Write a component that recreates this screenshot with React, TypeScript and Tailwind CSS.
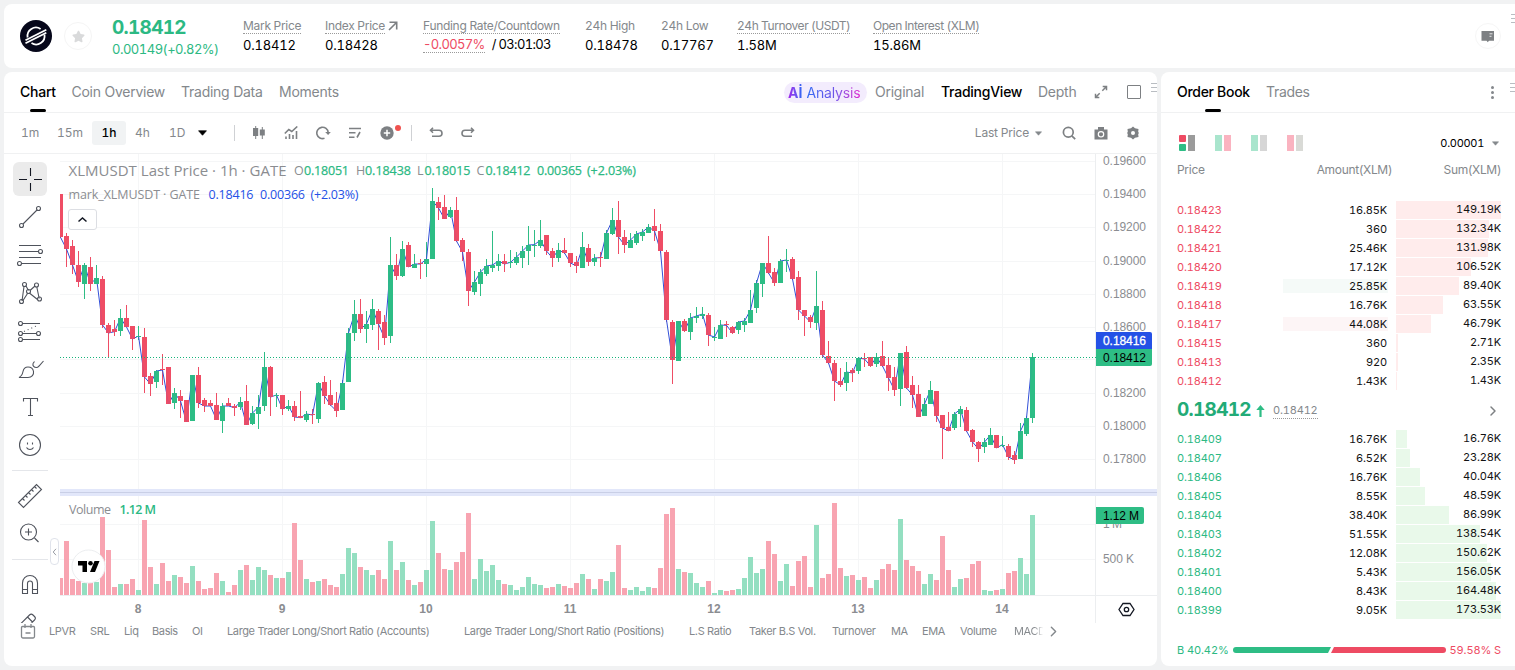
import React from 'react'
import { FiChevronRight } from 'react-icons/fi'
import { FaStar } from 'react-icons/fa'

type Candle = [dir: 'u' | 'd', high: number, top: number, bottom: number, low: number]

// one row per hour, in thirds of a pixel from the top of the price pane
const CANDLES: Candle[] = [
  ['d', 117, 117, 247, 250], ['d', 235, 243, 282, 335], ['d', 255, 273, 330, 357], ['d', 288, 330, 381, 395],
  ['u', 323, 330, 387, 431], ['d', 306, 336, 387, 407], ['u', 330, 369, 387, 387], ['d', 363, 372, 510, 518],
  ['d', 504, 510, 534, 607], ['d', 495, 522, 530, 542], ['u', 462, 489, 528, 542], ['d', 450, 489, 516, 516],
  ['d', 513, 513, 552, 585], ['u', 513, 543, 546, 556], ['d', 519, 546, 666, 713], ['d', 653, 663, 687, 723],
  ['u', 645, 648, 681, 698], ['d', 597, 642, 645, 689], ['d', 636, 636, 747, 747], ['u', 698, 714, 744, 761],
  ['d', 705, 723, 738, 788], ['d', 735, 735, 801, 801], ['u', 660, 660, 797, 797], ['d', 636, 660, 744, 758],
  ['d', 728, 735, 753, 771], ['d', 735, 744, 753, 753], ['d', 714, 750, 794, 794], ['u', 744, 753, 797, 833],
  ['d', 730, 744, 753, 753], ['d', 747, 753, 758, 782], ['u', 726, 741, 756, 764], ['d', 690, 738, 810, 810],
  ['u', 753, 774, 807, 810], ['u', 720, 756, 777, 822], ['u', 591, 636, 753, 768], ['d', 633, 636, 726, 783],
  ['u', 714, 720, 724, 756], ['d', 720, 720, 762, 780], ['u', 735, 753, 762, 768], ['d', 738, 753, 786, 798],
  ['d', 708, 783, 788, 789], ['u', 768, 777, 795, 801], ['d', 762, 777, 780, 807], ['u', 681, 684, 792, 803],
  ['d', 663, 681, 723, 747], ['d', 675, 720, 750, 753], ['d', 711, 744, 768, 786], ['u', 675, 684, 765, 765],
  ['u', 519, 534, 681, 681], ['u', 435, 477, 534, 558], ['d', 432, 477, 522, 534], ['u', 468, 507, 522, 564],
  ['u', 432, 462, 510, 525], ['d', 462, 468, 507, 585], ['d', 480, 501, 549, 570], ['u', 246, 330, 543, 564],
  ['d', 297, 330, 363, 375], ['u', 258, 282, 363, 366], ['d', 261, 270, 336, 336], ['u', 297, 327, 339, 339],
  ['d', 312, 324, 327, 372], ['u', 261, 312, 327, 366], ['u', 99, 138, 312, 312], ['d', 126, 141, 159, 195],
  ['d', 120, 156, 192, 192], ['u', 156, 165, 186, 189], ['d', 126, 165, 258, 260], ['d', 249, 255, 291, 318],
  ['d', 282, 291, 408, 453], ['u', 348, 381, 411, 420], ['u', 342, 351, 387, 423], ['u', 312, 333, 357, 363],
  ['u', 228, 330, 339, 351], ['u', 297, 318, 333, 348], ['d', 297, 318, 327, 351], ['u', 285, 322, 325, 339],
  ['u', 291, 306, 324, 330], ['u', 273, 288, 309, 339], ['u', 213, 270, 288, 330], ['u', 225, 269, 272, 306],
  ['u', 195, 255, 273, 279], ['d', 240, 240, 288, 300], ['d', 279, 288, 309, 336], ['u', 264, 285, 309, 321],
  ['d', 249, 285, 294, 297], ['d', 294, 294, 324, 336], ['d', 303, 321, 333, 354], ['u', 231, 276, 339, 339],
  ['d', 267, 279, 321, 333], ['u', 297, 309, 321, 333], ['d', 291, 305, 308, 336], ['u', 225, 234, 312, 312],
  ['u', 159, 195, 237, 240], ['d', 138, 195, 246, 297], ['d', 225, 246, 270, 294], ['u', 234, 255, 279, 279],
  ['u', 228, 237, 264, 270], ['u', 222, 231, 243, 258], ['u', 207, 216, 234, 234], ['d', 162, 213, 228, 258],
  ['d', 207, 228, 288, 294], ['d', 285, 291, 495, 500], ['d', 495, 501, 615, 687], ['u', 498, 498, 618, 618],
  ['d', 492, 498, 528, 531], ['u', 474, 489, 531, 555], ['u', 456, 483, 489, 504], ['u', 456, 477, 483, 492],
  ['d', 474, 480, 540, 573], ['u', 516, 546, 549, 558], ['u', 495, 510, 552, 552], ['d', 498, 508, 511, 546],
  ['d', 513, 516, 534, 537], ['u', 498, 501, 525, 537], ['u', 489, 498, 510, 531], ['u', 405, 465, 504, 504],
  ['u', 375, 384, 459, 474], ['u', 324, 324, 387, 426], ['d', 243, 324, 354, 357], ['d', 339, 351, 384, 393],
  ['u', 312, 318, 384, 384], ['u', 282, 315, 318, 351], ['d', 306, 312, 372, 375], ['d', 348, 366, 465, 495],
  ['d', 465, 465, 483, 543], ['d', 480, 486, 501, 519], ['u', 348, 453, 504, 525], ['d', 438, 465, 600, 606],
  ['d', 558, 603, 624, 627], ['d', 615, 624, 678, 738], ['d', 639, 678, 690, 696], ['u', 621, 651, 684, 708],
  ['d', 639, 645, 654, 681], ['u', 606, 609, 648, 657], ['d', 594, 609, 612, 636], ['d', 606, 606, 633, 636],
  ['u', 594, 606, 627, 636], ['d', 558, 603, 633, 636], ['d', 606, 630, 669, 708], ['d', 636, 666, 705, 723],
  ['u', 594, 594, 702, 753], ['d', 573, 591, 699, 702], ['d', 663, 690, 720, 759], ['d', 690, 717, 786, 786],
  ['u', 729, 747, 783, 783], ['u', 678, 705, 747, 747], ['d', 708, 708, 783, 801], ['d', 780, 780, 819, 912],
  ['d', 771, 816, 828, 828], ['u', 771, 777, 819, 825], ['u', 753, 762, 777, 816], ['d', 756, 765, 828, 831],
  ['d', 822, 825, 861, 876], ['d', 858, 861, 882, 921], ['u', 849, 861, 876, 894], ['u', 819, 840, 870, 870],
  ['d', 840, 840, 879, 879], ['u', 843, 869, 872, 876], ['d', 867, 873, 906, 915], ['d', 888, 900, 915, 927],
  ['u', 804, 828, 912, 912], ['u', 783, 789, 837, 843], ['u', 594, 606, 789, 804],
]

// top edge of each volume bar, the pane's floor is at 375
const VOLUMES = [
  324, 213, 327, 333, 338, 338, 336, 140, 240, 351, 342, 342, 327, 360, 151, 292, 342, 279, 333, 315,
  321, 339, 288, 333, 357, 354, 309, 333, 366, 345, 300, 285, 330, 291, 300, 315, 324, 324, 305, 160,
  270, 327, 336, 333, 327, 345, 351, 312, 233, 249, 291, 300, 315, 300, 327, 213, 300, 276, 330, 345,
  336, 300, 153, 249, 297, 300, 276, 246, 129, 327, 267, 303, 285, 329, 342, 345, 360, 351, 321, 343,
  345, 354, 351, 342, 348, 354, 339, 312, 327, 357, 327, 333, 305, 225, 354, 360, 351, 363, 351, 354,
  293, 132, 114, 297, 305, 309, 339, 351, 333, 369, 360, 363, 360, 357, 324, 261, 309, 297, 213, 252,
  333, 282, 348, 273, 258, 351, 165, 324, 312, 99, 293, 318, 315, 330, 321, 354, 330, 297, 282, 300,
  147, 270, 288, 303, 343, 312, 330, 198, 300, 351, 327, 324, 282, 273, 360, 363, 360, 357, 309, 303,
  264, 312, 135,
]

const PRICE_TICKS = [
  { label: '0.19600', y: 160.5 },
  { label: '0.19400', y: 193.5 },
  { label: '0.19200', y: 226.5 },
  { label: '0.19000', y: 260.5 },
  { label: '0.18800', y: 293.5 },
  { label: '0.18600', y: 326.5 },
  { label: '0.18200', y: 392.5 },
  { label: '0.18000', y: 425.5 },
  { label: '0.17800', y: 458.5 },
]

const DAYS = [8, 9, 10, 11, 12, 13, 14]

const STATS = [
  { label: '24h High', value: '0.18478', width: 'w-[76px]', dotted: false },
  { label: '24h Low', value: '0.17767', width: 'w-[76px]', dotted: false },
  { label: '24h Turnover (USDT)', value: '1.58M', width: 'w-[136px]', dotted: true },
  { label: 'Open Interest (XLM)', value: '15.86M', width: 'w-[120px]', dotted: true },
]

const ASKS = [
  { price: '0.18423', amount: '16.85K', sum: '149.19K', bar: 105 },
  { price: '0.18422', amount: '360', sum: '132.34K', bar: 93 },
  { price: '0.18421', amount: '25.46K', sum: '131.98K', bar: 92 },
  { price: '0.18420', amount: '17.12K', sum: '106.52K', bar: 75 },
  { price: '0.18419', amount: '25.85K', sum: '89.40K', bar: 63, flash: 'bg-[#f5faf8]' },
  { price: '0.18418', amount: '16.76K', sum: '63.55K', bar: 47 },
  { price: '0.18417', amount: '44.08K', sum: '46.79K', bar: 35, flash: 'bg-[#fdf5f6]' },
  { price: '0.18415', amount: '360', sum: '2.71K', bar: 2 },
  { price: '0.18413', amount: '920', sum: '2.35K', bar: 1.5 },
  { price: '0.18412', amount: '1.43K', sum: '1.43K', bar: 1 },
]

const BIDS = [
  { price: '0.18409', amount: '16.76K', sum: '16.76K', bar: 11 },
  { price: '0.18407', amount: '6.52K', sum: '23.28K', bar: 14 },
  { price: '0.18406', amount: '16.76K', sum: '40.04K', bar: 24 },
  { price: '0.18405', amount: '8.55K', sum: '48.59K', bar: 29 },
  { price: '0.18404', amount: '38.40K', sum: '86.99K', bar: 53 },
  { price: '0.18403', amount: '51.55K', sum: '138.54K', bar: 84 },
  { price: '0.18402', amount: '12.08K', sum: '150.62K', bar: 91 },
  { price: '0.18401', amount: '5.43K', sum: '156.05K', bar: 95 },
  { price: '0.18400', amount: '8.43K', sum: '164.48K', bar: 100 },
  { price: '0.18399', amount: '9.05K', sum: '173.53K', bar: 105 },
]

const INDICATORS = [
  { label: 'LPVR', width: 'w-[41px]' },
  { label: 'SRL', width: 'w-[34px]' },
  { label: 'Liq', width: 'w-[28px]' },
  { label: 'Basis', width: 'w-[40px]' },
  { label: 'OI', width: 'w-[35px]' },
  { label: 'Large Trader Long/Short Ratio (Accounts)', width: 'w-[237px]' },
  { label: 'Large Trader Long/Short Ratio (Positions)', width: 'w-[225px]' },
  { label: 'L.S Ratio', width: 'w-[60px]' },
  { label: 'Taker B.S Vol.', width: 'w-[83px]' },
  { label: 'Turnover', width: 'w-[59px]' },
  { label: 'MA', width: 'w-[31px]' },
  { label: 'EMA', width: 'w-[38px]' },
  { label: 'Volume', width: 'w-[54px]' },
]

const BOOK_VIEWS = [
  { left: 'bg-[#a9e5cd]', right: 'bg-[#fab3c0]' },
  { left: 'bg-[#a9e5cd]', right: 'bg-[#d6d6d6]' },
  { left: 'bg-[#fab3c0]', right: 'bg-[#d9dad6]' },
]

const DRAW_TOOLS = [
  {
    name: 'trend',
    icon: (
      <>
        <path d="M10 24 24 10" />
        <circle cx="8.5" cy="25.5" r="2" />
        <circle cx="25.5" cy="8.5" r="2" />
      </>
    ),
  },
  {
    name: 'fib',
    icon: (
      <>
        <path d="M6 7.5h22M6 13.5h19.5M6 19.5h22M8.5 25.5H28" />
        <circle cx="27.5" cy="13.5" r="2" />
        <circle cx="6.5" cy="25.5" r="2" />
      </>
    ),
  },
  {
    name: 'pattern',
    icon: (
      <>
        <path d="M9 25 11 10.5M13 10 15.5 14.5M17 14.5 22 10M23.8 11 26.2 22.5M24.5 23.5 17 17.5M14.5 17.5 10 24.5" />
        <circle cx="11.5" cy="8.5" r="2" />
        <circle cx="23.5" cy="9" r="2" />
        <circle cx="15.5" cy="15.5" r="2" />
        <circle cx="8.5" cy="25.5" r="2" />
        <circle cx="26.5" cy="23" r="2" />
      </>
    ),
  },
  {
    name: 'forecast',
    icon: (
      <>
        <path d="M9.5 9.5H27M9.5 19.5h14M9.5 25.5H27" />
        <path d="M11 17.5 25.5 11" strokeDasharray="1 3" />
        <circle cx="7.5" cy="9.5" r="2" />
        <circle cx="7.5" cy="19.5" r="2" />
        <circle cx="25.5" cy="19.5" r="2" />
        <circle cx="7.5" cy="25.5" r="2" />
      </>
    ),
  },
  {
    name: 'brush',
    icon: (
      <>
        <path d="M6 25.500h9c4 0 6-3 5.500-6-.5-3-3-4.500-5.500-4.500-3 0-4.500 2-5 4.500-.5 2.500-2 5-4 6Z" />
        <path d="M20 11.500c-.5 2.500 1 4 3.500 4 1.500 0 2-1 2.500-1.500l4.500-5M20 11.500l1.500-2" />
      </>
    ),
  },
  { name: 'text', icon: <path d="M10.500 11.500v-3h14v3M17.500 8.500v17M15 25.500h5" /> },
  {
    name: 'emoji',
    icon: (
      <>
        <circle cx="17" cy="17" r="10.5" />
        <path d="M14.500 14.500v2M19.500 14.500v2M13.500 19.500c1 1.700 2 2 3.500 2s2.500-.3 3.500-2" />
      </>
    ),
  },
]

function ToolIcon({ children }: { children: React.ReactNode }) {
  return (
    <svg
      width="34"
      height="34"
      viewBox="0 0 34 34"
      fill="none"
      stroke="#4f535c"
      strokeWidth="1.1"
      className="shrink-0"
    >
      {children}
    </svg>
  )
}

function Logo() {
  return (
    <svg width="32" height="32" viewBox="0 0 32 32" className="shrink-0">
      <circle cx="16" cy="16" r="16" fill="#06071a" />
      <g fill="none" stroke="#fff" strokeWidth="1.8">
        <path d="M7.6 17.5a8.500 8.500 0 0 1 13-8.600" />
        <path d="M24.5 14.6a8.500 8.500 0 0 1-13 8.500" />
        <path d="M5.5 20.3 26.3 9.7" />
        <path d="M5.5 23.3 26.3 12.7" />
      </g>
    </svg>
  )
}

function DragHandle() {
  return (
    <span className="flex w-1.5 flex-col gap-[3px]">
      <i className="h-px bg-[#b9bdc2]" />
      <i className="h-px bg-[#b9bdc2]" />
      <i className="h-px bg-[#b9bdc2]" />
    </span>
  )
}

function Caret({ className }: { className: string }) {
  return (
    <svg width="8" height="5" viewBox="0 0 8 5" className={className}>
      <path d="M.5.5h7L4 4.5Z" fill="currentColor" stroke="currentColor" strokeWidth=".6" strokeLinejoin="round" />
    </svg>
  )
}

function TopBar() {
  return (
    <header className="flex h-16 items-center rounded-l-lg bg-white pl-4">
      <Logo />
      <span className="ml-3 flex size-7 items-center justify-center rounded-full border border-[#f5f5f5]">
        <FaStar size={13} className="text-[#d9dadb]" />
      </span>

      <div className="ml-5 w-[131px] pt-0.5 text-[#2cb983] tabular-nums">
        <p className="text-[19px] leading-[23px] font-bold tracking-[-0.7px]">0.18412</p>
        <p className="text-[13px] leading-[20px] tracking-[-0.5px]">0.00149(+0.82%)</p>
      </div>

      <div className="flex pb-0.5 text-[12px] leading-[17px] tracking-[-0.3px] text-[#84888c] tabular-nums">
        <div className="w-[82px]">
          <span className="border-b border-dotted border-[#9a9a9a]">Mark Price</span>
          <p className="mt-[3px] text-[13px] tracking-[-0.2px] text-black">0.18412</p>
        </div>
        <div className="w-[98px]">
          <span className="whitespace-nowrap">
            <span className="border-b border-dotted border-[#9a9a9a]">Index Price</span>
            <svg
              width="10"
              height="10"
              viewBox="0 0 10 10"
              fill="none"
              stroke="#7d8083"
              strokeWidth="1.6"
              className="ml-[3px] inline-block align-[-1px]"
            >
              <path d="M1 9 8.5 1.5M1.5 1.300h7.200V8.500" />
            </svg>
          </span>
          <p className="mt-[3px] text-[13px] tracking-[-0.2px] text-black">0.18428</p>
        </div>
        <div className="w-[162px]">
          <span className="border-b border-dotted border-[#9a9a9a] whitespace-nowrap">Funding Rate/Countdown</span>
          <p className="mt-0.5 text-[13px] tracking-[-0.65px] text-black">
            <span className="border-b border-dotted border-[#9a9a9a] text-[#ee4b63]">-0.0057%</span>
            <span className="ml-[7px]">/ 03:01:03</span>
          </p>
        </div>
        {STATS.map((stat) => (
          <div key={stat.label} className={stat.width}>
            <span
              className={
                stat.dotted
                  ? 'border-b border-dotted border-[#9a9a9a] tracking-[-0.45px] whitespace-nowrap'
                  : 'whitespace-nowrap'
              }
            >
              {stat.label}
            </span>
            <p className="mt-[3px] text-[13px] tracking-[-0.2px] text-black">{stat.value}</p>
          </div>
        ))}
      </div>

      <span className="mr-[5px] ml-auto flex size-[26px] items-center justify-center rounded-full border border-[#f6f6f6]">
        <svg width="14" height="13" viewBox="0 0 14 13">
          <path d="M.5 1h12.5v9.800H8l-1.200 1.500-1.200-1.500H.5Z" fill="#7d8083" />
          <path d="M8.500 3.800h3M8.500 6.300h2" stroke="#fff" strokeOpacity=".8" />
        </svg>
      </span>
      <div className="flex h-full w-[9px] flex-col justify-start overflow-hidden pt-2.5 pl-[5px]">
        <DragHandle />
      </div>
    </header>
  )
}

function ChartTabs() {
  return (
    <div className="flex h-[41px] items-center border-b border-[#f0f1f2] pl-4 text-[14px] tracking-[-0.25px] text-[#84888c]">
      <div className="relative w-[51.5px] pb-px font-medium text-black">
        Chart
        <span className="absolute top-[27.5px] left-[10px] h-[3px] w-4 rounded-sm bg-black" />
      </div>
      <span className="w-[109.5px] pb-px">Coin Overview</span>
      <span className="w-[98px] pb-px">Trading Data</span>
      <span className="pb-px">Moments</span>

      <div className="ml-auto flex items-center">
        <span className="flex h-[21px] w-[83px] items-center rounded-full bg-[#f3ecfd] pl-1">
          <b className="bg-linear-to-r from-[#a01bea] to-[#2565f5] bg-clip-text font-bold tracking-normal text-transparent">
            Aİ
          </b>
          <span className="ml-1 bg-linear-to-r from-[#2b6bf3] via-[#6a55ea] to-[#dd22cf] bg-clip-text tracking-[-0.15px] text-transparent">
            Analysis
          </span>
        </span>
        <span className="ml-2 w-[66px] pb-px">Original</span>
        <span className="w-[97px] pb-px font-medium text-black">TradingView</span>
        <span className="w-[56px] pb-px">Depth</span>
        <svg width="14" height="14" viewBox="0 0 14 14" fill="none" stroke="#7d8083" strokeWidth="1.5">
          <path d="M8.3 5.7 12 2M8.7 1.5h3.8v3.8M5.7 8.3 2 12M5.3 12.5H1.5V8.7" />
        </svg>
        <span className="ml-[19px] size-[14px] rounded-[1px] border-[1.5px] border-[#7d8083]" />
        <div className="ml-[10px] h-[19px]">
          <DragHandle />
        </div>
      </div>
    </div>
  )
}

function ChartToolbar() {
  return (
    <div className="flex h-[41px] items-center border-b border-[#f0f1f2] pl-[17px] text-[12px] text-[#84888c] tabular-nums">
      <span className="w-[36px]">1m</span>
      <span className="w-[35px]">15m</span>
      <span className="flex h-6 w-[34px] items-center justify-center rounded-[3px] bg-[#f1f3f4] font-medium text-black">
        1h
      </span>
      <span className="ml-[9px] w-[34px]">4h</span>
      <span className="w-[29px]">1D</span>
      <Caret className="h-[6px] w-[9px] text-black" />
      <span className="ml-[27px] h-4 w-px bg-[#cfd1d4]" />

      <svg width="14" height="14" viewBox="0 0 14 14" className="ml-[17px]" fill="#7d8083">
        <path d="M3.2 0h1v2h2v8h-2v3h-1v-3H1V2h2.2ZM9.8 1h1v2.5h2v6h-2V13h-1V9.5h-2v-6h2Z" />
      </svg>
      <svg width="14" height="14" viewBox="0 0 14 14" className="ml-[18px]" fill="none" stroke="#7d8083" strokeWidth="1.6">
        <path d="m.8 7.5 4-4 3 2 5.500-5M2 10.5V13M5.5 8v5M9 9v4M12.5 5v8" />
      </svg>
      <svg width="15" height="14" viewBox="0 0 15 14" className="ml-[18px]" fill="none" stroke="#7d8083" strokeWidth="1.6">
        <path d="M8.500 12.3A5.700 5.700 0 1 1 12.2 6.500" />
        <path d="M9.2 6h5.600L12.100 9Z" fill="#7d8083" stroke="none" />
      </svg>
      <svg width="14" height="12" viewBox="0 0 14 12" className="ml-[17px]" fill="none" stroke="#7d8083" strokeWidth="1.6">
        <path d="M1 1.5h12M1 5.8h6.5M1 10.2h5.5M12 5l-3 5.5" />
      </svg>
      <span className="relative ml-[18px] size-[14px]">
        <svg width="14" height="14" viewBox="0 0 14 14">
          <circle cx="7" cy="7" r="6.7" fill="#7d8083" />
          <path d="M7 3.8v6.4M3.8 7h6.4" stroke="#fff" strokeWidth="1.5" />
        </svg>
        <i className="absolute -top-px left-[15px] size-1.5 rounded-full bg-[#f0524f]" />
      </span>
      <span className="ml-[17px] h-4 w-px bg-[#cfd1d4]" />
      <svg width="14" height="12" viewBox="0 0 14 12" className="ml-[17px]" fill="none" stroke="#7d8083" strokeWidth="1.6">
        <path d="M4 .8 1.5 3.3 4 5.8M1.8 3.3h8.2a2.800 2.800 0 0 1 0 6H3" />
      </svg>
      <svg width="14" height="12" viewBox="0 0 14 12" className="ml-[18px]" fill="none" stroke="#7d8083" strokeWidth="1.6">
        <path d="m10 .8 2.5 2.5L10 5.8M12.2 3.3H4a2.800 2.800 0 0 0 0 6h7" />
      </svg>

      <span className="ml-auto tracking-[-0.2px]">Last Price</span>
      <Caret className="ml-1.5 h-[5px] w-[7px]" />
      <svg width="14" height="14" viewBox="0 0 14 14" className="ml-[20px]" fill="none" stroke="#7d8083" strokeWidth="1.7">
        <circle cx="6.3" cy="6.3" r="4.9" />
        <path d="m9.8 9.8 3.4 3.4" />
      </svg>
      <svg width="14" height="13" viewBox="0 0 14 13" className="ml-[18px]">
        <path d="M4 0h6v2.5h3.5v10H.5v-10H4Z" fill="#7d8083" />
        <circle cx="7" cy="7.3" r="2.7" fill="none" stroke="#fff" strokeWidth="1.2" />
      </svg>
      <svg width="14" height="14" viewBox="0 0 14 14" className="mr-[17px] ml-[18px]">
        <path
          d="M7 .5 9 2.2 12.5 3 12.2 6 13 7l-.8 1 .3 3L9 11.8 7 13.5 5 11.8 1.5 11l.3-3L1 7l.8-1-.3-3L5 2.2Z"
          fill="#7d8083"
        />
        <circle cx="7" cy="7" r="2" fill="#fff" />
      </svg>
    </div>
  )
}

function DrawingTools() {
  return (
    <div className="flex h-[469px] w-12 shrink-0 flex-col items-center gap-1 overflow-hidden pt-2 pl-1">
      <span className="rounded-md bg-[#ebebeb]">
        <svg width="34" height="34" viewBox="0 0 34 34" stroke="#131722" strokeWidth="1.1">
          <path d="M17.5 6v8M17.5 21v8M6 17.5h8M21 17.5h8" />
        </svg>
      </span>
      {DRAW_TOOLS.map((tool) => (
        <ToolIcon key={tool.name}>{tool.icon}</ToolIcon>
      ))}
      <span className="mt-1 h-px w-9 shrink-0 bg-[#e4e6ea]" />
      <span className="mt-1 flex shrink-0 flex-col gap-1">
        <ToolIcon>
          <path d="M5.5 23.5 23.5 5.5 28.5 10.5 10.5 28.5ZM9.5 19.5l2 2M12.5 16.5l2 2M15.5 13.5l2 2M18.5 10.5l2 2M21.5 7.5l2 2" />
        </ToolIcon>
        <ToolIcon>
          <circle cx="15.5" cy="15" r="8" />
          <path d="M15.5 11.5v7M12 15h7M21.5 21l4 4" />
        </ToolIcon>
      </span>
      <span className="mt-1 h-px w-9 shrink-0 bg-[#e4e6ea]" />
      <span className="mt-1 flex shrink-0 flex-col gap-1">
        <ToolIcon>
          <path d="M9.5 25.5V15a7.500 7.500 0 0 1 15 0v10.500h-5V15.500a2.500 2.500 0 0 0-5 0v10ZM9.5 21.500h5M19.5 21.500h5" />
        </ToolIcon>
        <ToolIcon>
          <path d="M8 17.500 16.500 9c1-1 2.500-1 3.500 0l1.500 1.500c1 1 1 2.500 0 3.500L13 22.500M14.500 11l5 5M21 17.500h5" />
        </ToolIcon>
      </span>
    </div>
  )
}

// x and y below are window coordinates, the viewBox is offset to suit
function PriceChart() {
  const markLine = CANDLES.map(
    ([dir, , top, bottom], i) => `${i * 18 + 1.5},${dir === 'u' ? top : bottom}`,
  ).join(' ')

  return (
    <svg
      width="1097"
      height="469"
      viewBox="60 154 1097 469"
      className="shrink-0 font-['Liberation_Sans',sans-serif]"
    >
      <g stroke="#f5f6f7" shapeRendering="crispEdges">
        {PRICE_TICKS.map((tick) => (
          <path key={tick.label} d={`M60 ${tick.y + 1}H1096`} />
        ))}
        <path d="M60 359.5H1096M60 524.5H1096M60 559.5H1096" />
        {DAYS.map((day, i) => (
          <path key={day} d={`M${138.5 + i * 144} 154V595`} />
        ))}
      </g>
      <path d="M1095.5 154V623M60 595.5H1157" stroke="#eceef0" shapeRendering="crispEdges" />

      <rect x="60" y="489" width="1097" height="7" fill="#e2e7fa" />
      <path d="M60 492.5H1157" stroke="#c9cfe6" shapeRendering="crispEdges" />

      <svg x="60" y="154" width="1036" height="442" viewBox="0 -3 3108 1326">
        <g shapeRendering="crispEdges">
          {CANDLES.map(([dir], i) => (
            <rect
              key={i}
              x={i * 18 - 6}
              y={945 + VOLUMES[i]}
              width="15"
              height={375 - VOLUMES[i]}
              fill={dir === 'u' ? '#94dfc1' : '#f8a4b1'}
            />
          ))}
          {CANDLES.map(([dir, high, top, bottom, low], i) => (
            <path
              key={i}
              d={`M${i * 18} ${high}h3V${low}h-3ZM${i * 18 - 6} ${top}h15V${bottom}h-15Z`}
              fill={dir === 'u' ? '#2ebd85' : '#ef4d65'}
            />
          ))}
        </g>
        <polyline points={markLine} fill="none" stroke="#3350d8" strokeWidth="3" />
        <g shapeRendering="crispEdges">
          {CANDLES.map(([dir, , top, bottom], i) => (
            <path
              key={i}
              d={`M${i * 18 - 6} ${top}h15V${bottom}h-15Z`}
              fill={dir === 'u' ? '#2ebd85' : '#ef4d65'}
              fillOpacity=".88"
            />
          ))}
        </g>
      </svg>
      <path d="M60 357.5H1096" stroke="#16b37a" strokeDasharray="1 2" />

      <g fill="#8b8d91" fontSize="12">
        {PRICE_TICKS.map((tick) => (
          <text key={tick.label} x="1103" y={tick.y + 4.5} textLength="43">
            {tick.label}
          </text>
        ))}
        <text x="1103" y="528" textLength="19">1 M</text>
        <text x="1103" y="563" textLength="31">500 K</text>
        <g textAnchor="middle" fontWeight="bold">
          {DAYS.map((day, i) => (
            <text key={day} x={138 + i * 144} y="613">
              {day}
            </text>
          ))}
        </g>
      </g>
      <path d="M1096 332h54a2 2 0 0 1 2 2v15h-56Z" fill="#2451e6" />
      <path d="M1096 349h56v15a2 2 0 0 1-2 2h-54Z" fill="#2ebd85" />
      <path d="M1096 507h46a2 2 0 0 1 2 2v13a2 2 0 0 1-2 2h-46Z" fill="#2ebd85" />
      <g fontSize="12">
        <text x="1103" y="345" textLength="43" fill="#fff" stroke="#fff" strokeWidth=".3">0.18416</text>
        <text x="1103" y="362" textLength="43" fill="#000">0.18412</text>
        <text x="1103" y="520" textLength="36" fill="#000">1.12 M</text>
      </g>

      <g className="font-['Open_Sans',sans-serif]" fill="#8b8d91">
        <text x="68.5" y="176" fontSize="15" textLength="218">XLMUSDT Last Price · 1h · GATE</text>
        <g fontSize="12.5">
          <text x="294" y="175">O</text>
          <text x="356" y="175">H</text>
          <text x="417" y="175">L</text>
          <text x="476.5" y="175">C</text>
          <g fill="#2cb983" stroke="#2cb983" strokeWidth=".25">
            <text x="304" y="175" textLength="45">0.18051</text>
            <text x="365" y="175" textLength="46">0.18438</text>
            <text x="424.5" y="175" textLength="46">0.18015</text>
            <text x="485.5" y="175" textLength="45">0.18412</text>
            <text x="537" y="175" textLength="45">0.00365</text>
            <text x="587" y="175" textLength="49">(+2.03%)</text>
          </g>
          <text x="68.5" y="199" textLength="131.5">mark_XLMUSDT · GATE</text>
          <g fill="#2451e6">
            <text x="208.5" y="199" textLength="45">0.18416</text>
            <text x="260" y="199" textLength="45">0.00366</text>
            <text x="310.5" y="199" textLength="48">(+2.03%)</text>
          </g>
          <text x="69" y="514" textLength="42">Volume</text>
          <text x="119.5" y="514" textLength="36.5" fill="#2cb983" fontWeight="600">1.12 M</text>
        </g>
      </g>

      <rect x="68.5" y="209.5" width="28" height="20" rx="2.5" fill="#fff" stroke="#dcdee3" />
      <path d="m78.5 221.5 4-3.500 4 3.500" fill="none" stroke="#131722" strokeWidth="1.5" />

      <circle cx="88.5" cy="566.5" r="16.5" fill="#fff" stroke="#eceef0" />
      <path d="M78 561h9v11h-4.500v-6.500H78ZM94.500 561h5L95 572h-5Z" fill="#000" />
      <circle cx="90.5" cy="563.3" r="2.3" fill="#000" />

      <g fill="none" stroke="#131722" strokeWidth="1.3">
        <path d="m1123 603.500h7l4 6-4 6h-7l-4-6Z" />
        <circle cx="1126.5" cy="609.5" r="2.2" />
      </g>
    </svg>
  )
}

function ChartPanel() {
  return (
    <section className="flex h-[594px] w-[1153px] shrink-0 flex-col rounded-lg bg-white">
      <ChartTabs />
      <ChartToolbar />
      <div className="relative flex">
        <DrawingTools />
        <span className="w-2 shrink-0" />
        <PriceChart />
        <span className="absolute top-[384px] left-[46px] flex h-[27px] w-[9px] items-center justify-center rounded-[4px] border border-[#e0e3eb] bg-white">
          <svg width="5" height="8" viewBox="0 0 5 8" fill="none" stroke="#9a9da5">
            <path d="M4 .8 1.2 4 4 7.2" />
          </svg>
        </span>
      </div>
      <div className="flex h-4 items-center pl-4 text-[11px] tracking-[-0.37px] text-[#84888c]">
        <svg width="16" height="15" viewBox="0 0 16 15" fill="none" stroke="#84888c" strokeWidth="1.3" className="mr-[13px]">
          <path d="M2.5 2.500h11a1 1 0 0 1 1 1v9a1.500 1.500 0 0 1-1.500 1.500H3a1.500 1.500 0 0 1-1.500-1.500v-9a1 1 0 0 1 1-1ZM5 0v4M11 0v4M5.500 9h5" />
        </svg>
        {INDICATORS.map((item) => (
          <span key={item.label} className={`${item.width} shrink-0 whitespace-nowrap`}>
            {item.label}
          </span>
        ))}
        <span className="w-[31px] bg-linear-to-r from-[#84888c] from-65% to-transparent to-95% bg-clip-text text-transparent">
          MACD
        </span>
        <FiChevronRight size={17} strokeWidth={2} />
      </div>
    </section>
  )
}

type Level = { price: string; amount: string; sum: string; bar: number; flash?: string }

function BookRow({ level, side }: { level: Level; side: 'ask' | 'bid' }) {
  return (
    <li className="flex h-[19px] text-[11px] leading-[19px] tracking-[-0.15px] text-[#121214] tabular-nums">
      <span className={side === 'ask' ? 'w-[106px] text-[#ee4b63]' : 'w-[106px] text-[#2cb983]'}>{level.price}</span>
      <span className={`mt-0.5 h-[14px] w-[105px] pr-px text-right leading-[15px] ${level.flash ?? ''}`}>
        {level.amount}
      </span>
      <span className="ml-2 grid h-[18px] w-[105px]">
        <i
          className={side === 'ask' ? 'col-start-1 row-start-1 bg-[#ffecec]' : 'col-start-1 row-start-1 bg-[#e9f9ea]'}
          style={{ width: level.bar }}
        />
        <span className="col-start-1 row-start-1 text-right leading-[17px]">{level.sum}</span>
      </span>
    </li>
  )
}

function OrderBook() {
  return (
    <section className="flex h-[594px] flex-1 flex-col rounded-l-lg bg-white">
      <div className="flex h-[41px] items-center border-b border-[#f0f1f2] pl-4 text-[14px] tracking-[-0.3px] text-[#84888c]">
        <div className="relative w-[89px] pb-px font-medium text-black">
          Order Book
          <span className="absolute top-[27.5px] left-[28px] h-[3px] w-4 rounded-sm bg-black" />
        </div>
        <span className="pb-px">Trades</span>
        <span className="ml-auto flex flex-col gap-0.5">
          <i className="size-[3px] rounded-full bg-[#84888c]" />
          <i className="size-[3px] rounded-full bg-[#84888c]" />
          <i className="size-[3px] rounded-full bg-[#84888c]" />
        </span>
        <div className="ml-[16px] h-[19px] w-[5px] overflow-hidden">
          <DragHandle />
        </div>
      </div>

      <div className="mt-[22px] flex h-4 items-center gap-5 pl-[18px]">
        <span className="flex gap-0.5">
          <span className="flex flex-col gap-0.5">
            <i className="size-[7px] rounded-[1px] bg-[#ee4b63]" />
            <i className="size-[7px] rounded-[1px] bg-[#2ebd85]" />
          </span>
          <i className="h-4 w-[7px] bg-[#9b9b9b]" />
        </span>
        {BOOK_VIEWS.map((view) => (
          <span key={view.left + view.right} className="flex gap-0.5">
            <i className={`h-4 w-[7px] ${view.left}`} />
            <i className={`h-4 w-[7px] ${view.right}`} />
          </span>
        ))}
        <span className="ml-auto flex items-center text-[11px] tracking-[-0.3px] text-black tabular-nums">
          0.00001
          <Caret className="mr-4 ml-2 h-[5px] w-[7px] text-[#84888c]" />
        </span>
      </div>

      <div className="mt-2 flex pr-3.5 pl-4 text-[12px] leading-[21px] tracking-[-0.3px] text-[#84888c]">
        <span className="w-[106px]">Price</span>
        <span className="w-[109px] text-right">Amount(XLM)</span>
        <span className="w-[109px] text-right">Sum(XLM)</span>
      </div>

      <ul className="mt-[21px] pl-4">
        {ASKS.map((level) => (
          <BookRow key={level.price} level={level} side="ask" />
        ))}
      </ul>

      <div className="flex h-[39px] items-center pl-4 tabular-nums">
        <span className="text-[19px] font-bold tracking-[-0.7px] text-[#22ab77]">0.18412</span>
        <svg width="9" height="12" viewBox="0 0 9 12" className="ml-[5px]" fill="#2ebd85">
          <path d="M4.5 0 8.7 5H5.6v7H3.4V5H.3Z" />
        </svg>
        <span className="ml-2 border-b border-dotted border-[#9a9a9a] text-[11px] leading-[16px] tracking-[-0.15px] text-[#84888c]">
          0.18412
        </span>
        <FiChevronRight size={16} strokeWidth={2.2} className="mr-[14px] ml-auto text-[#7d8083]" />
      </div>

      <ul className="pl-4">
        {BIDS.map((level) => (
          <BookRow key={level.price} level={level} side="bid" />
        ))}
      </ul>

      <div className="mt-[22px] flex h-4 items-center pr-3.5 pl-4 text-[11px] tracking-[-0.1px] tabular-nums">
        <span className="w-14 whitespace-nowrap text-[#2cb983]">B 40.42%</span>
        <svg width="214" height="6" viewBox="0 0 214 6">
          <path d="M3 0h95l-3 6H3a3 3 0 0 1 0-6Z" fill="#2ebd85" />
          <path d="M101 0h109a3 3 0 0 1 0 6H98Z" fill="#ee4b63" />
        </svg>
        <span className="ml-auto whitespace-nowrap text-[#ee4b63]">59.58% S</span>
      </div>
    </section>
  )
}

export default function App() {
  return (
    <div className="flex h-[670px] w-[1515px] flex-col gap-1 overflow-hidden bg-[#f1f2f3] pt-1 pl-1 font-['Inter','Liberation_Sans',sans-serif]">
      <TopBar />
      <main className="flex gap-1">
        <ChartPanel />
        <OrderBook />
      </main>
    </div>
  )
}
